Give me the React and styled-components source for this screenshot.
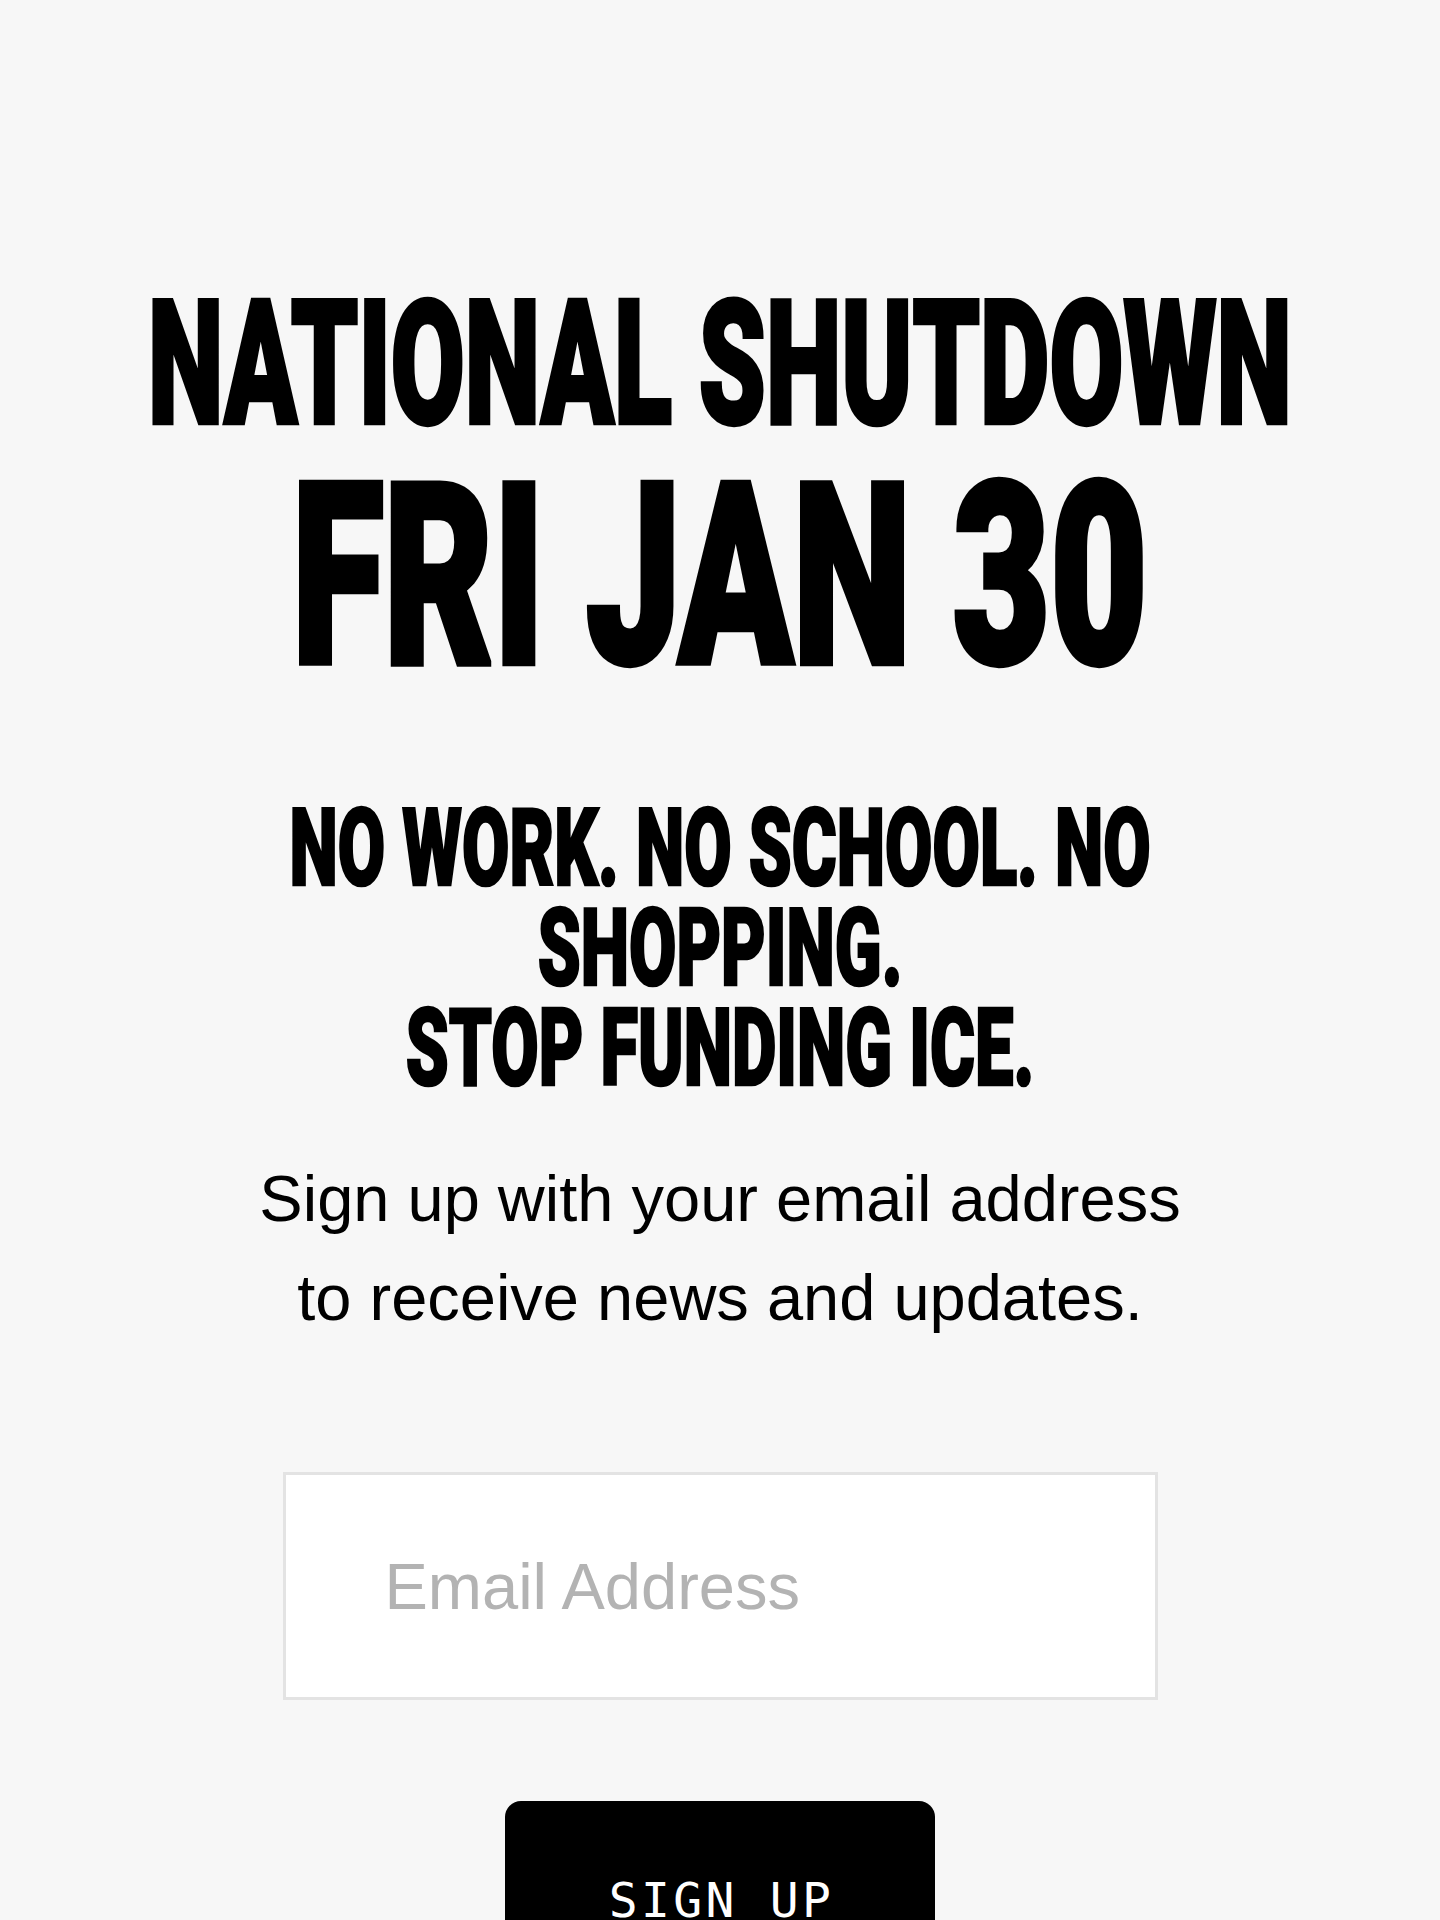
import React, { useLayoutEffect, useRef, useState } from 'react';
import styled, { createGlobalStyle } from 'styled-components';

const GlobalStyle = createGlobalStyle`
  html, body {
    margin: 0;
    padding: 0;
    background: #f7f7f7;
  }
  body {
    overflow-x: hidden;
  }
`;

const Page = styled.main`
  box-sizing: border-box;
  min-height: 1920px;
  padding-top: 289px;
  display: flex;
  flex-direction: column;
  align-items: center;
  background: #f7f7f7;
  color: #000;
`;

const Display = styled.h1`
  width: 100%;
  margin: ${(p) => p.$gap || 0}px 0 0;
  display: flex;
  justify-content: center;
  font-family: Roboto, "Liberation Sans", Arial, sans-serif;
  font-weight: 900;
  font-size: ${(p) => p.$size}px;
  line-height: ${(p) => p.$lh}px;
  letter-spacing: 0;
  text-transform: uppercase;
  -webkit-text-stroke: ${(p) => (p.$size * 0.025).toFixed(1)}px #000;
`;

const Ink = styled.span`
  display: inline-block;
  flex: none;
  white-space: nowrap;
  text-align: center;
  transform-origin: center top;
`;

function Squeeze({ to, children }) {
  const ref = useRef(null);
  const [k, setK] = useState(1);

  useLayoutEffect(() => {
    const fit = () => {
      const w = ref.current ? ref.current.offsetWidth : 0;
      if (w) setK(to / w);
    };
    fit();
    if (document.fonts && document.fonts.ready) document.fonts.ready.then(fit);
  }, [to]);

  return (
    <Ink ref={ref} style={{ transform: `scaleX(${k})` }}>
      {children}
    </Ink>
  );
}

const Lede = styled.p`
  margin: 51px 0 0;
  font-family: "Liberation Sans", Arial, Helvetica, sans-serif;
  font-size: 65px;
  line-height: 99px;
  font-weight: 400;
  text-align: center;
  color: #000;
`;

const SignupForm = styled.form`
  margin-top: 125px;
  display: flex;
  flex-direction: column;
  align-items: center;
`;

const EmailField = styled.input`
  box-sizing: border-box;
  width: 875px;
  height: 228px;
  padding: 0 96px 0 99px;
  border: 3px solid #e3e3e3;
  border-radius: 0;
  background: #fff;
  font-family: "Liberation Sans", Arial, Helvetica, sans-serif;
  font-size: 65px;
  color: #000;
  outline: none;

  &::placeholder {
    color: #b3b3b3;
    opacity: 1;
  }
`;

const SubmitButton = styled.button`
  box-sizing: border-box;
  margin-top: 101px;
  width: 430px;
  padding: 75px 0 75px 3px;
  border: none;
  border-radius: 16px;
  background: #000;
  color: #fff;
  font-family: "DejaVu Sans Mono", "Liberation Mono", monospace;
  font-size: 48px;
  line-height: 48px;
  letter-spacing: 3.3px;
  cursor: pointer;
`;

export default function App() {
  return (
    <>
      <GlobalStyle />
      <Page>
        <Display $size={172} $lh={150}>
          <Squeeze to={1144}>National Shutdown</Squeeze>
        </Display>
        <Display as="h2" $size={252} $lh={200} $gap={38}>
          <Squeeze to={856}>Fri Jan 30</Squeeze>
        </Display>
        <Display as="h3" $size={108} $lh={100} $gap={121}>
          <Squeeze to={861}>
            No work. No school. No
            <br />
            shopping.
            <br />
            Stop funding ICE.
          </Squeeze>
        </Display>
        <Lede>
          Sign up with your email address
          <br />
          to receive news and updates.
        </Lede>
        <SignupForm onSubmit={(e) => e.preventDefault()}>
          <EmailField type="email" name="email" placeholder="Email Address" />
          <SubmitButton type="submit">SIGN UP</SubmitButton>
        </SignupForm>
      </Page>
    </>
  );
}
